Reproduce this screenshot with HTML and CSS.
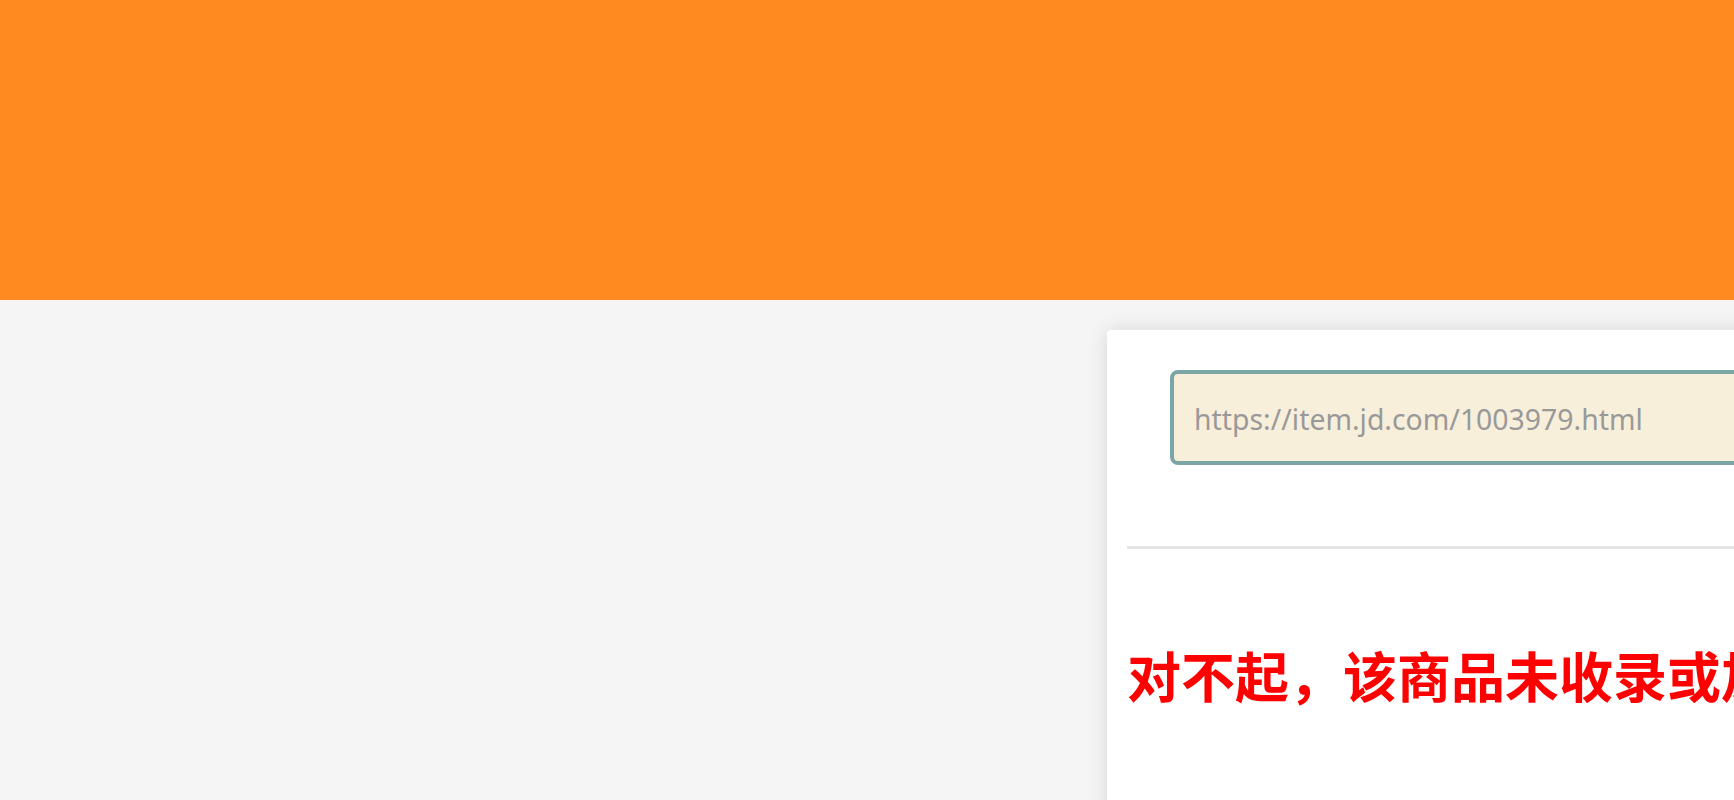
FILE: index.html
```html
<!DOCTYPE html>
<html lang="zh-CN">
<head>
<meta charset="utf-8">
<title>商品查询</title>
<link rel="stylesheet" href="styles.css">
</head>
<body>
<header class="topbar"></header>
<main class="page">
  <aside class="side"></aside>
  <section class="card">
    <div class="search">
      <input class="url" type="text" placeholder="https://item.jd.com/1003979.html">
    </div>
    <hr class="divider">
    <h2 class="msg">对不起，该商品未收录或加载失败！</h2>
  </section>
</main>
</body>
</html>
```
FILE: styles.css
```css
html, body {
  margin: 0;
  padding: 0;
}
body {
  background: #f5f5f5;
  overflow: hidden;
  height: 800px;
  font-family: "Noto Sans", "Noto Sans CJK SC", sans-serif;
}
.topbar {
  height: 300px;
  background: #ff8a1f;
}
.page {
  display: grid;
  grid-template-columns: 1107px 1000px;
  padding-top: 30px;
}
.card {
  background: #fff;
  border-radius: 4px;
  box-shadow: 0 0 20px rgba(0, 0, 0, 0.12);
  padding: 40px 20px 0;
  min-height: 600px;
}
.search {
  padding-left: 43px;
}
.url {
  box-sizing: border-box;
  width: 760px;
  height: 95px;
  border: 4px solid #7aa6a6;
  border-radius: 8px;
  background: #f8efdb;
  padding: 3px 20px 0;
  font-family: "Noto Sans", sans-serif;
  font-size: 28.4px;
  color: #666;
  outline: none;
  display: block;
}
.url::placeholder {
  color: #999;
}
.divider {
  margin: 81px 0 0;
  border: none;
  height: 3px;
  background: #e5e5e5;
}
.msg {
  margin: 99px 0 0;
  color: #ff0000;
  font-family: "Noto Sans CJK SC", sans-serif;
  font-weight: 700;
  font-size: 54px;
  line-height: 1;
  white-space: nowrap;
}
```
